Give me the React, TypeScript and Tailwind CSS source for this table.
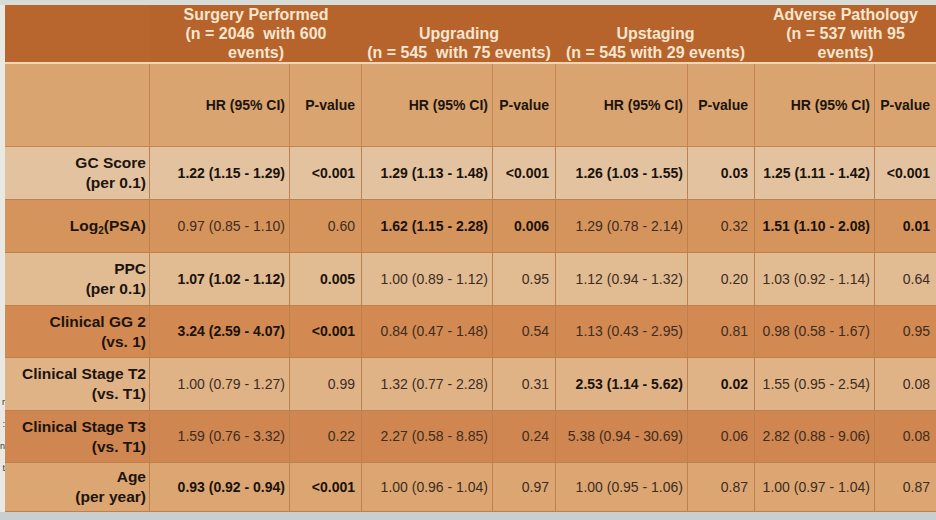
type Cell = { v: string; b?: boolean };

const groups = [
  { lines: ["Surgery Performed", "(n = 2046  with 600", "events)"] },
  { lines: ["Upgrading", "(n = 545  with 75 events)"] },
  { lines: ["Upstaging", "(n = 545 with 29 events)"] },
  { lines: ["Adverse Pathology", "(n = 537 with 95", "events)"] },
];

const rows: { label: React.ReactNode[]; bg: string; h: string; cells: Cell[] }[] = [
  {
    label: ["GC Score", "(per 0.1)"],
    bg: "bg-[#e3c29f]",
    h: "h-[53px]",
    cells: [
      { v: "1.22 (1.15 - 1.29)", b: true }, { v: "<0.001", b: true },
      { v: "1.29 (1.13 - 1.48)", b: true }, { v: "<0.001", b: true },
      { v: "1.26 (1.03 - 1.55)", b: true }, { v: "0.03", b: true },
      { v: "1.25 (1.11 - 1.42)", b: true }, { v: "<0.001", b: true },
    ],
  },
  {
    label: [<span key="l">Log<sub className="text-[10px]">2</sub>(PSA)</span>],
    bg: "bg-[#d5945b]",
    h: "h-[53px]",
    cells: [
      { v: "0.97 (0.85 - 1.10)" }, { v: "0.60" },
      { v: "1.62 (1.15 - 2.28)", b: true }, { v: "0.006", b: true },
      { v: "1.29 (0.78 - 2.14)" }, { v: "0.32" },
      { v: "1.51 (1.10 - 2.08)", b: true }, { v: "0.01", b: true },
    ],
  },
  {
    label: ["PPC", "(per 0.1)"],
    bg: "bg-[#e1bb92]",
    h: "h-[53px]",
    cells: [
      { v: "1.07 (1.02 - 1.12)", b: true }, { v: "0.005", b: true },
      { v: "1.00 (0.89 - 1.12)" }, { v: "0.95" },
      { v: "1.12 (0.94 - 1.32)" }, { v: "0.20" },
      { v: "1.03 (0.92 - 1.14)" }, { v: "0.64" },
    ],
  },
  {
    label: ["Clinical GG 2", "(vs. 1)"],
    bg: "bg-[#d38952]",
    h: "h-[52px]",
    cells: [
      { v: "3.24 (2.59 - 4.07)", b: true }, { v: "<0.001", b: true },
      { v: "0.84 (0.47 - 1.48)" }, { v: "0.54" },
      { v: "1.13 (0.43 - 2.95)" }, { v: "0.81" },
      { v: "0.98 (0.58 - 1.67)" }, { v: "0.95" },
    ],
  },
  {
    label: ["Clinical Stage T2", "(vs. T1)"],
    bg: "bg-[#e0b387]",
    h: "h-[53px]",
    cells: [
      { v: "1.00 (0.79 - 1.27)" }, { v: "0.99" },
      { v: "1.32 (0.77 - 2.28)" }, { v: "0.31" },
      { v: "2.53 (1.14 - 5.62)", b: true }, { v: "0.02", b: true },
      { v: "1.55 (0.95 - 2.54)" }, { v: "0.08" },
    ],
  },
  {
    label: ["Clinical Stage T3", "(vs. T1)"],
    bg: "bg-[#cf8650]",
    h: "h-[52px]",
    cells: [
      { v: "1.59 (0.76 - 3.32)" }, { v: "0.22" },
      { v: "2.27 (0.58 - 8.85)" }, { v: "0.24" },
      { v: "5.38 (0.94 - 30.69)" }, { v: "0.06" },
      { v: "2.82 (0.88 - 9.06)" }, { v: "0.08" },
    ],
  },
  {
    label: ["Age", "(per year)"],
    bg: "bg-[#dba672]",
    h: "h-[49px]",
    cells: [
      { v: "0.93 (0.92 - 0.94)", b: true }, { v: "<0.001", b: true },
      { v: "1.00 (0.96 - 1.04)" }, { v: "0.97" },
      { v: "1.00 (0.95 - 1.06)" }, { v: "0.87" },
      { v: "1.00 (0.97 - 1.04)" }, { v: "0.87" },
    ],
  },
];

const cols = "grid-cols-[145px_140px_72px_131px_63px_132px_67px_120px_61px]";

export default function App() {
  return (
    <div
      className="w-[936px] h-[520px] overflow-hidden bg-[#c9cfd0] flex flex-col"
      style={{ fontFamily: '"Liberation Sans", Arial, sans-serif' }}
    >
      <div className="h-[5px] bg-[#d7dcd9] shrink-0" />
      <div className="flex">
        {/* poster edge on the left */}
        <div className="w-[5px] shrink-0 bg-[#e9e9e4] text-[#333] text-[9px] leading-[22px] pt-[386px] flex flex-col items-end">
          <div>r</div>
          <div>:</div>
          <div>n</div>
          <div>t</div>
        </div>

        <div className={`grid ${cols} text-[#1c140e]`}>
          {/* group header band */}
          <div className="bg-[#b8662e] h-[59px] border-b-2 border-[#f0d6b4]" />
          {groups.map((g, i) => (
            <div
              key={i}
              className="col-span-2 bg-[#b6632c] h-[59px] border-b-2 border-[#f0d6b4] flex flex-col justify-end items-center text-[#f6e6d0] font-bold text-[16px] leading-[19px] whitespace-nowrap"
            >
              {g.lines.map((l, j) => (
                <div key={j} className="whitespace-pre">{l}</div>
              ))}
            </div>
          ))}

          {/* sub header */}
          <div className="bg-[#d9a470] h-[83px] border-r border-[#a0582a] border-b border-[#c48550]" />
          {Array.from({ length: 4 }).map((_, i) => (
            <div key={i} className="contents">
              <div className="bg-[#d9a470] h-[83px] border-r border-[#b8784a] border-b border-[#c48550] flex items-center justify-end pr-[4px] font-bold text-[14px]">
                HR (95% CI)
              </div>
              <div className={`bg-[#d9a470] h-[83px] border-b border-[#c48550] flex items-center justify-end pr-[6px] font-bold text-[14px] ${i === 3 ? "" : "border-r border-[#b8784a]"}`}>
                P-value
              </div>
            </div>
          ))}

          {rows.map((r, ri) => (
            <div key={ri} className="contents">
              <div
                className={`${r.bg} ${r.h} border-r border-[#a0582a] border-b border-[#bf8050] flex flex-col justify-center items-end pr-[3px] font-bold text-[15.5px] leading-[20px] whitespace-nowrap`}
              >
                {r.label.map((l, j) => (
                  <div key={j}>{l}</div>
                ))}
              </div>
              {r.cells.map((c, ci) => (
                <div
                  key={ci}
                  className={`${r.bg} ${r.h} border-b border-[#bf8050] ${
                    ci === 7 ? "" : "border-r border-[#b8784a]"
                  } flex items-center justify-end whitespace-nowrap text-[14px] ${
                    ci % 2 === 0 ? "pr-[4px]" : "pr-[6px]"
                  } ${c.b ? "font-bold text-[#1a120b]" : "text-[#3d2c1f]"}`}
                >
                  {c.v}
                </div>
              ))}
            </div>
          ))}
        </div>
      </div>
    </div>
  );
}
